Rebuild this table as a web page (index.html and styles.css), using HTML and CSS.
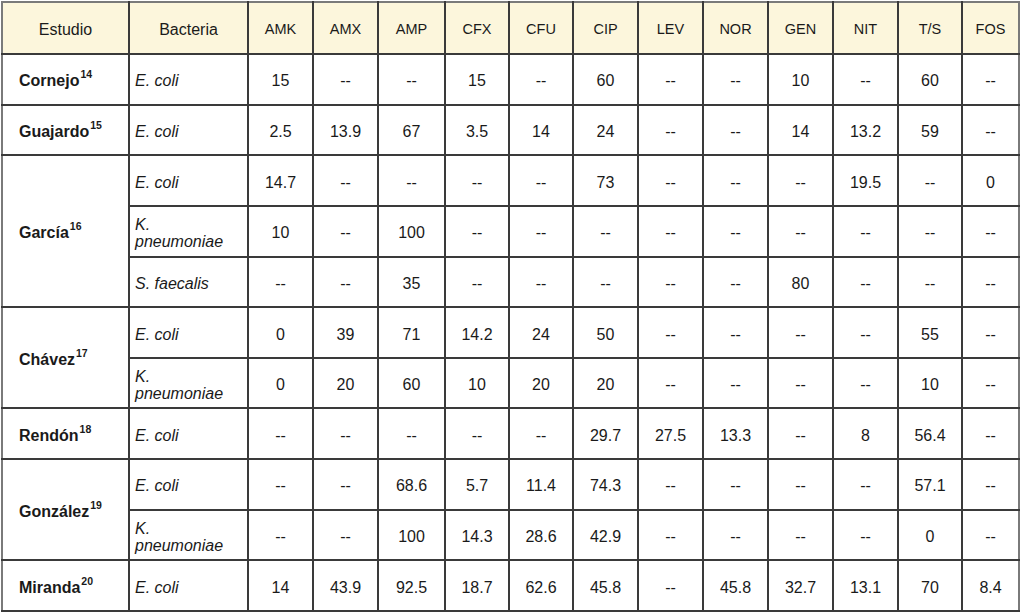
FILE: index.html
```html
<!DOCTYPE html>
<html lang="es">
<head>
<meta charset="utf-8">
<title>Resistencia antimicrobiana</title>
<link rel="stylesheet" href="styles.css">
</head>
<body>
<table class="res">
  <colgroup>
    <col class="c-est"><col class="c-bac">
    <col class="c65"><col class="c65"><col class="c67"><col class="c64"><col class="c64"><col class="c65">
    <col class="c65"><col class="c65"><col class="c65"><col class="c65"><col class="c64"><col class="c57">
  </colgroup>
  <thead>
    <tr>
      <th class="big">Estudio</th><th class="big">Bacteria</th>
      <th>AMK</th><th>AMX</th><th>AMP</th><th>CFX</th><th>CFU</th><th>CIP</th>
      <th>LEV</th><th>NOR</th><th>GEN</th><th>NIT</th><th>T/S</th><th>FOS</th>
    </tr>
  </thead>
  <tbody>
    <tr>
      <td class="est">Cornejo<sup>14</sup></td><td class="bac">E. coli</td>
      <td>15</td><td>--</td><td>--</td><td>15</td><td>--</td><td>60</td><td>--</td><td>--</td><td>10</td><td>--</td><td>60</td><td>--</td>
    </tr>
    <tr>
      <td class="est">Guajardo<sup>15</sup></td><td class="bac">E. coli</td>
      <td>2.5</td><td>13.9</td><td>67</td><td>3.5</td><td>14</td><td>24</td><td>--</td><td>--</td><td>14</td><td>13.2</td><td>59</td><td>--</td>
    </tr>
    <tr>
      <td class="est" rowspan="3">García<sup>16</sup></td><td class="bac">E. coli</td>
      <td>14.7</td><td>--</td><td>--</td><td>--</td><td>--</td><td>73</td><td>--</td><td>--</td><td>--</td><td>19.5</td><td>--</td><td>0</td>
    </tr>
    <tr>
      <td class="bac">K. pneumoniae</td>
      <td>10</td><td>--</td><td>100</td><td>--</td><td>--</td><td>--</td><td>--</td><td>--</td><td>--</td><td>--</td><td>--</td><td>--</td>
    </tr>
    <tr>
      <td class="bac">S. faecalis</td>
      <td>--</td><td>--</td><td>35</td><td>--</td><td>--</td><td>--</td><td>--</td><td>--</td><td>80</td><td>--</td><td>--</td><td>--</td>
    </tr>
    <tr>
      <td class="est" rowspan="2">Chávez<sup>17</sup></td><td class="bac">E. coli</td>
      <td>0</td><td>39</td><td>71</td><td>14.2</td><td>24</td><td>50</td><td>--</td><td>--</td><td>--</td><td>--</td><td>55</td><td>--</td>
    </tr>
    <tr>
      <td class="bac">K. pneumoniae</td>
      <td>0</td><td>20</td><td>60</td><td>10</td><td>20</td><td>20</td><td>--</td><td>--</td><td>--</td><td>--</td><td>10</td><td>--</td>
    </tr>
    <tr>
      <td class="est">Rendón<sup>18</sup></td><td class="bac">E. coli</td>
      <td>--</td><td>--</td><td>--</td><td>--</td><td>--</td><td>29.7</td><td>27.5</td><td>13.3</td><td>--</td><td>8</td><td>56.4</td><td>--</td>
    </tr>
    <tr>
      <td class="est" rowspan="2">González<sup>19</sup></td><td class="bac">E. coli</td>
      <td>--</td><td>--</td><td>68.6</td><td>5.7</td><td>11.4</td><td>74.3</td><td>--</td><td>--</td><td>--</td><td>--</td><td>57.1</td><td>--</td>
    </tr>
    <tr>
      <td class="bac">K. pneumoniae</td>
      <td>--</td><td>--</td><td>100</td><td>14.3</td><td>28.6</td><td>42.9</td><td>--</td><td>--</td><td>--</td><td>--</td><td>0</td><td>--</td>
    </tr>
    <tr>
      <td class="est">Miranda<sup>20</sup></td><td class="bac">E. coli</td>
      <td>14</td><td>43.9</td><td>92.5</td><td>18.7</td><td>62.6</td><td>45.8</td><td>--</td><td>45.8</td><td>32.7</td><td>13.1</td><td>70</td><td>8.4</td>
    </tr>
  </tbody>
</table>
</body>
</html>
```

FILE: styles.css
```css
html, body {
  margin: 0;
  padding: 0;
  background: #ffffff;
}
body {
  padding: 1px 0 0 1px;
  font-family: "Liberation Sans", Arial, sans-serif;
  color: #1a1a1a;
}
.res {
  border-collapse: collapse;
  table-layout: fixed;
  width: 1017px;
}
.c-est { width: 127px; }
.c-bac { width: 119px; }
.c65 { width: 65px; }
.c67 { width: 67px; }
.c64 { width: 64px; }
.c57 { width: 57px; }

.res th,
.res td {
  border: 2px solid #3a3a3a;
  padding: 3px 0 0 0;
  text-align: center;
  vertical-align: middle;
  font-size: 16px;
  line-height: 17px;
  font-weight: normal;
}
.res thead tr { height: 52px; }
.res tbody tr { height: 50.65px; }
.res th {
  background: #fcf6dc;
  font-size: 14.5px;
  padding-top: 2px;
}
.res th.big { font-size: 16px; }
.res thead th { border-top-color: #7a7a7a; }
.res tr > :first-child.est,
.res thead th:first-child { border-left-color: #7a7a7a; }
.res tr > :last-child { border-right-color: #7a7a7a; }

.res td.est {
  text-align: left;
  padding-left: 16px;
  font-weight: bold;
}
.res td.est sup {
  font-size: 10.5px;
  line-height: 0;
  vertical-align: 8px;
  margin-left: 1px;
}
.res td.bac {
  text-align: left;
  font-style: italic;
  padding-left: 5px;
  padding-right: 16px;
}
```
